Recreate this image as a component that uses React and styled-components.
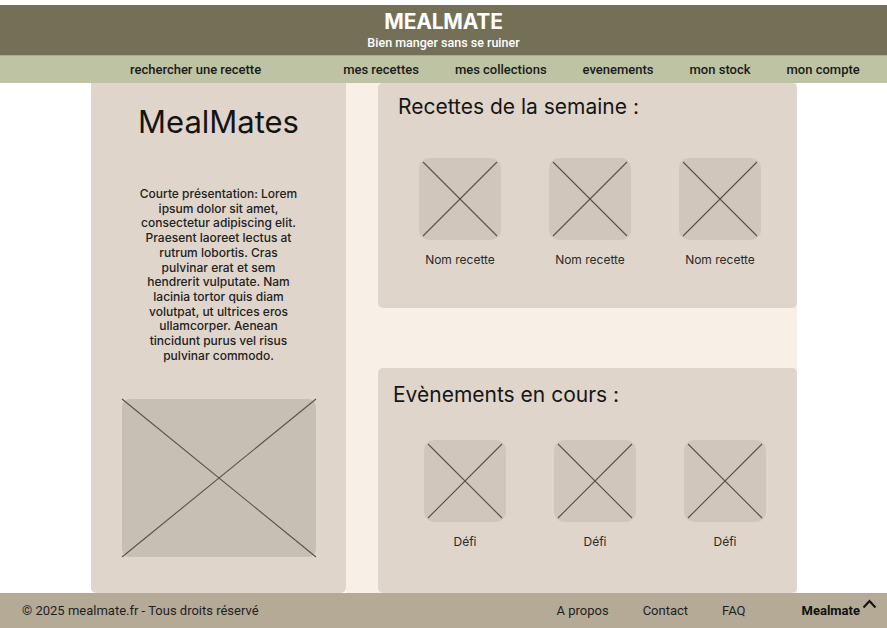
import React from 'react'
import styled, { createGlobalStyle } from 'styled-components'

const GlobalStyle = createGlobalStyle`
  html, body {
    margin: 0;
    padding: 0;
    background: #ffffff;
  }
  body {
    font-family: Inter, "Liberation Sans", sans-serif;
    color: #1c1c1c;
  }
`

const recettes = ['Nom recette', 'Nom recette', 'Nom recette']
const defis = ['Défi', 'Défi', 'Défi']

function Placeholder({ className, inset = 0 }) {
  return (
    <ImageBox className={className}>
      <Cross $inset={inset} viewBox="0 0 100 100" preserveAspectRatio="none">
        <line x1="0" y1="0" x2="100" y2="100" vectorEffect="non-scaling-stroke" />
        <line x1="100" y1="0" x2="0" y2="100" vectorEffect="non-scaling-stroke" />
      </Cross>
    </ImageBox>
  )
}

function Section({ title, items, offset, titleTop, titleLeft, itemsTop }) {
  return (
    <Card>
      <CardTitle $top={titleTop} $left={titleLeft}>
        {title}
      </CardTitle>
      <Items $offset={offset} $top={itemsTop}>
        {items.map((label, i) => (
          <Item key={i}>
            <Thumb inset={4} />
            <ItemLabel>{label}</ItemLabel>
          </Item>
        ))}
      </Items>
    </Card>
  )
}

export default function App() {
  return (
    <Page>
      <GlobalStyle />
      <Header>
        <Brand>MEALMATE</Brand>
        <Tagline>Bien manger sans se ruiner</Tagline>
      </Header>
      <Nav>
        <NavLink $first>rechercher une recette</NavLink>
        <NavLink>mes recettes</NavLink>
        <NavLink>mes collections</NavLink>
        <NavLink>evenements</NavLink>
        <NavLink>mon stock</NavLink>
        <NavLink>mon compte</NavLink>
      </Nav>
      <Main>
        <Aside>
          <AsideTitle>MealMates</AsideTitle>
          <Intro>
            Courte présentation: Lorem ipsum dolor sit amet, consectetur
            adipiscing elit. Praesent laoreet lectus at rutrum lobortis. Cras
            pulvinar erat et sem hendrerit vulputate. Nam lacinia tortor quis
            diam volutpat, ut ultrices eros ullamcorper. Aenean tincidunt purus
            vel risus pulvinar commodo.
          </Intro>
          <BigImage />
        </Aside>
        <Column>
          <Section
            title="Recettes de la semaine :"
            items={recettes}
            offset={41}
            titleTop={11}
            titleLeft={20}
            itemsTop={38}
          />
          <Section
            title="Evènements en cours :"
            items={defis}
            offset={46}
            titleTop={14}
            titleLeft={15}
            itemsTop={32}
          />
        </Column>
      </Main>
      <Footer>
        <Copyright>© 2025 mealmate.fr - Tous droits réservé</Copyright>
        <FooterLinks>
          <FooterLink>A propos</FooterLink>
          <FooterLink>Contact</FooterLink>
          <FooterLink>FAQ</FooterLink>
          <FooterBrand>
            Mealmate
            <svg width="15" height="10" viewBox="0 0 15 10">
              <path d="M1.5 8.5 L7.5 2 L13.5 8.5" fill="none" stroke="#111" strokeWidth="2" />
            </svg>
          </FooterBrand>
        </FooterLinks>
      </Footer>
    </Page>
  )
}

const Page = styled.div`
  width: 887px;
  height: 628px;
  padding-top: 5px;
  box-sizing: border-box;
  display: flex;
  flex-direction: column;
  overflow: hidden;
`

const Header = styled.header`
  height: 50px;
  background: #747057;
  display: flex;
  flex-direction: column;
  align-items: center;
  justify-content: center;
  color: #ffffff;
`

const Brand = styled.h1`
  margin: 0;
  font-family: Inter, sans-serif;
  font-size: 21px;
  font-weight: 700;
  line-height: 22px;
  letter-spacing: -0.2px;
`

const Tagline = styled.div`
  font-family: Roboto, sans-serif;
  font-size: 12.5px;
  font-weight: 500;
  line-height: 15px;
  margin-top: 2px;
`

const Nav = styled.nav`
  height: 28px;
  background: #bec3a3;
  border-top: 1px solid #a9ad8f;
  box-sizing: border-box;
  display: flex;
  align-items: center;
  gap: 36px;
  padding-left: 130px;
`

const NavLink = styled.a`
  font-family: Roboto, sans-serif;
  font-size: 13px;
  font-weight: 500;
  color: #1a1a1a;
  margin-right: ${(p) => (p.$first ? '46px' : '0')};
`

const Main = styled.main`
  flex: 1;
  display: flex;
  padding-left: 91px;
  padding-right: 90px;
`

const Aside = styled.section`
  width: 255px;
  background: #e0d5ca;
  border-radius: 0 0 5px 5px;
  display: flex;
  flex-direction: column;
  align-items: center;
  padding-top: 20px;
  box-sizing: border-box;
`

const AsideTitle = styled.h2`
  margin: 0;
  font-size: 31px;
  font-weight: 400;
  line-height: 38px;
  color: #141414;
`

const Intro = styled.p`
  margin: 46px 0 0;
  width: 164px;
  text-align: center;
  font-size: 12px;
  font-weight: 500;
  line-height: 14.7px;
  color: #222;
`

const ImageBox = styled.div`
  position: relative;
  background: #d0c6bb;
  border-radius: 10px;
`

const Cross = styled.svg`
  position: absolute;
  top: ${(p) => p.$inset}px;
  left: ${(p) => p.$inset}px;
  width: calc(100% - ${(p) => p.$inset * 2}px);
  height: calc(100% - ${(p) => p.$inset * 2}px);
  overflow: visible;

  line {
    stroke: #57514c;
    stroke-width: 1.1;
  }
`

const BigImage = styled(Placeholder)`
  width: 194px;
  height: 158px;
  margin-top: 36px;
  background: #c7beb4;
  border-radius: 8px;
`

const Column = styled.div`
  flex: 1;
  background: #f8efe6;
  padding-left: 32px;
  display: flex;
  flex-direction: column;
  justify-content: space-between;
`

const Card = styled.section`
  height: 225px;
  background: #e0d5ca;
  border-radius: 5px;
  box-sizing: border-box;
  display: flex;
  flex-direction: column;
`

const CardTitle = styled.h3`
  margin: ${(p) => p.$top}px 0 0 ${(p) => p.$left}px;
  font-size: 21px;
  font-weight: 400;
  line-height: 26px;
  color: #161616;
`

const Items = styled.div`
  display: flex;
  gap: 48px;
  padding-left: ${(p) => p.$offset}px;
  margin-top: ${(p) => p.$top}px;
`

const Item = styled.div`
  width: 82px;
  display: flex;
  flex-direction: column;
  align-items: center;
`

const Thumb = styled(Placeholder)`
  width: 82px;
  height: 82px;
`

const ItemLabel = styled.span`
  margin-top: 12px;
  font-size: 12px;
  line-height: 15px;
  color: #2a2a2a;
  white-space: nowrap;
`

const Footer = styled.footer`
  height: 35px;
  background: #b5aa95;
  display: flex;
  align-items: center;
  justify-content: space-between;
  padding: 0 10px 0 22px;
`

const Copyright = styled.span`
  font-family: Roboto, sans-serif;
  font-size: 13px;
  color: #1f1f1f;
`

const FooterLinks = styled.div`
  display: flex;
  align-items: center;
  gap: 34px;
`

const FooterLink = styled.a`
  font-family: Roboto, sans-serif;
  font-size: 13px;
  color: #1f1f1f;
`

const FooterBrand = styled.span`
  margin-left: 22px;
  display: flex;
  align-items: flex-start;
  gap: 2px;
  font-family: Roboto, sans-serif;
  font-size: 13px;
  font-weight: 700;
  color: #111;

  svg {
    margin-top: -4px;
  }
`
